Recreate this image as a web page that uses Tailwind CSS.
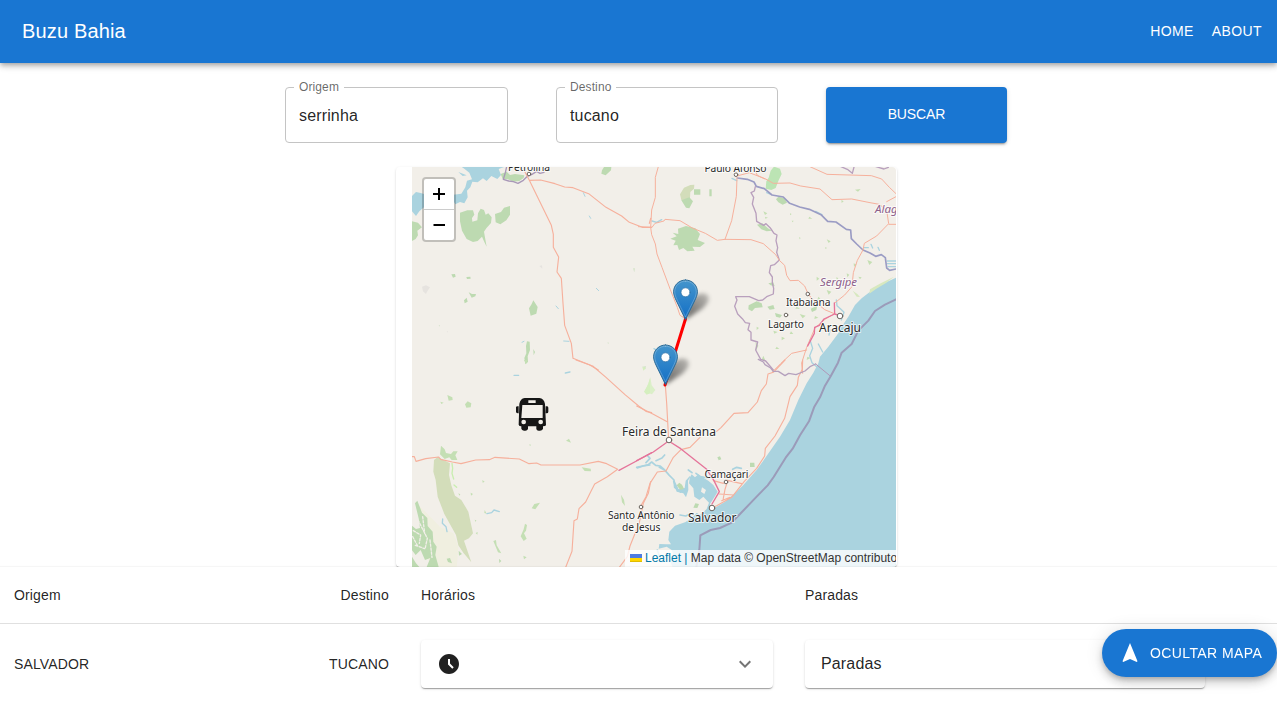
<!DOCTYPE html>
<html lang="pt-BR">
<head>
<meta charset="utf-8">
<title>Buzu Bahia</title>
<script src="https://cdn.jsdelivr.net/npm/@tailwindcss/browser@4"></script>
</head>
<body class="bg-white overflow-hidden h-[703px] font-['Liberation_Sans',Arial,sans-serif] text-[rgba(0,0,0,0.87)]">
<header class="relative z-10 flex items-center justify-between h-[63px] bg-[#1976d2] text-white pl-[22px] pr-[15px] pb-px shadow-[0_2px_4px_-1px_rgba(0,0,0,0.2),0_4px_5px_0_rgba(0,0,0,0.14),0_1px_10px_0_rgba(0,0,0,0.12)]">
  <h1 class="text-[20px] leading-8 tracking-[0.15px]">Buzu Bahia</h1>
  <nav class="flex gap-[18px] text-sm tracking-[0.4px]"><a>HOME</a><a>ABOUT</a></nav>
</header>
<main>
  <form class="flex gap-12 pl-[285px] pt-6 h-20">
    <fieldset class="relative w-[223px] h-14 rounded border border-[#c4c4c4] flex items-center px-[13px] pt-px">
      <span class="absolute left-2 -top-[9px] bg-white pl-[5px] pr-[5px] text-xs leading-4 tracking-[0.11px] text-black/60">Origem</span>
      <span class="text-base leading-[26px] tracking-[0.15px]">serrinha</span>
    </fieldset>
    <fieldset class="relative w-[222px] h-14 rounded border border-[#c4c4c4] flex items-center px-[13px] pt-px">
      <span class="absolute left-2 -top-[9px] bg-white pl-[5px] pr-[5px] text-xs leading-4 tracking-[0.11px] text-black/60">Destino</span>
      <span class="text-base leading-[26px] tracking-[0.15px]">tucano</span>
    </fieldset>
    <button type="button" class="w-[181px] h-14 rounded bg-[#1976d2] text-white text-sm tracking-[-0.1px] pb-0.5 shadow-[0_3px_1px_-2px_rgba(0,0,0,0.2),0_2px_2px_0_rgba(0,0,0,0.14),0_1px_5px_0_rgba(0,0,0,0.12)]">BUSCAR</button>
  </form>
  <section class="ml-[396px] mt-6 w-[501px] h-[400px] pl-4 pr-px rounded shadow-[0_2px_1px_-1px_rgba(0,0,0,0.2),0_1px_1px_0_rgba(0,0,0,0.14),0_1px_3px_0_rgba(0,0,0,0.12)]">
    <div class="relative w-[484px] h-[400px] overflow-hidden rounded-r bg-[#f2efe9]">
      <svg class="block" width="484" height="400" viewBox="412 167 484 400" fill="none" stroke-linejoin="round" stroke-linecap="round">
        <defs>
          <linearGradient id="pin" x1="0" y1="0" x2="0" y2="1"><stop offset="0" stop-color="#4595cc"/><stop offset="1" stop-color="#126fc6"/></linearGradient>
          <linearGradient id="shade" x1="0" y1="1" x2="1" y2="0"><stop offset="0" stop-color="#000" stop-opacity=".6"/><stop offset="1" stop-color="#000" stop-opacity=".22"/></linearGradient>
          <filter id="soft" x="-50%" y="-50%" width="200%" height="200%"><feGaussianBlur stdDeviation="2.2"/></filter>
        </defs>
        <!-- sea and inland water -->
        <g transform="translate(640,360) scale(.33333)">
          <path fill="#aad3df" d="M770-248L735-232 700-212 665-185 645-165 625-130 605-100 595-80 580-60 565-40 540-10 535 10 520 38 500 70 475 120 450 180 420 230 375 295 350 330 310 375 285 400 255 425 225 443 212 446 210 432 224 410 233 395 220 375 205 362 185 350 175 343 165 352 155 343 144 362 145 390 138 412 130 400 110 395 98 362 104 362 116 388 134 384 137 362 150 347 147 370 160 385 163 410 178 420 190 410 207 428 200 447 180 465 170 458 156 472 137 486 105 497 88 515 85 540 93 553 78 553 58 552 56 566 80 560 95 570 102 590 90 602 98 622 770 622Z"/>
          <path fill="#f2efe9" d="M158 440L172 420 181 434 176 452 162 464 152 455ZM186 382L198 390 193 402 183 395Z"/>
          <path fill="#bddab1" d="M110 376L118 368 126 374 132 386 121 390ZM166 430L177 432 172 444 160 443ZM330 308L343 308 344 321 330 321ZM232 292L240 289 244 298 236 301Z"/>
          <g stroke="#aad3df" stroke-width="5">
            <path d="M-10 322L8 318 25 314 35 306 47 316 60 318 74 330M18 308L30 295 22 286M48 302L66 294 74 285M58 322L75 331 88 346 102 360 104 382 122 396M145 330L156 338M168 340L181 350 206 354M66 606L58 588 52 570M278 328L290 322 304 325M120 465L137 468 150 462"/>
          </g>
        </g>
        <g transform="translate(390,160) scale(.33333)">
          <path fill="#aad3df" d="M66 108L78 96 92 99 102 102 115 108 130 116 142 118 157 96 171 82 190 104 214 101 226 82 231 62 246 58 238 38 224 27 214 20 345 20 326 27 333 45 322 57 304 48 290 63 279 55 263 67 247 65 241 82 231 92 233 112 223 130 210 126 196 133 187 118 166 108 146 132 123 120 102 142 88 154 78 168 66 154ZM205 36L230 46 218 48Z"/>
          <path fill="#bddab1" d="M66 184L84 188 96 202 82 212 84 226 77 237 66 243ZM210 158L232 151 249 151 253 164 246 174 247 185 262 181 264 160 272 146 282 150 287 164 295 160 305 172 303 189 289 205 282 215 290 260 283 246 276 230 263 243 249 246 230 237 216 212 210 184ZM315 162L333 156 342 143 360 138 360 164 349 181 331 193 317 187ZM332 42L350 35 360 45 375 42 403 46 401 54 388 63 370 65 352 57 338 57ZM636 31L642 21 664 21 663 31 647 46 634 41ZM184 343L195 342 197 350 189 353ZM229 351L241 350 242 356 231 357ZM236 397L246 402 258 402 256 409 245 413ZM222 421L230 413 233 425 224 430ZM430 421L443 441 439 461 422 467 417 445 425 432ZM411 544L419 545 420 570 413 589 414 606 406 613 403 594 409 580 408 558ZM430 567L435 576 431 586Z"/>
          <path fill="#bddab1" opacity=".55" d="M729 325L735 325 733 337ZM757 620L768 618 766 628ZM653 546L657 549 654 552ZM146 495L150 496 149 500Z"/>
          <path fill="#e6e3df" d="M96 380L108 376 120 382 112 394 108 402 99 394ZM448 318L456 316 457 326ZM170 514L174 514 173 518Z"/>
          <path stroke="#aad3df" stroke-width="3" d="M580 98L585 109M598 168L602 175M498 438L505 446M619 385L626 392M396 547L402 544M521 543L537 544"/>
          <path stroke="#a998b8" stroke-width="4" d="M350 20L346 38 340 58 356 63 370 65 384 70 400 61 412 49 426 43 440 34 450 40 462 37"/>
        </g>
        <g transform="translate(640,160) scale(.33333)">
          <path fill="#d3ddba" d="M120 103L132 83 151 75 163 74 162 86 151 96 150 113 141 128 124 120Z"/>
          <path fill="#bddab1" d="M124 121L148 112 159 124 148 145 138 143ZM162 88H181V104H162ZM208 88H215V109H208ZM114 206L138 198 166 205 180 222 173 240 195 249 180 261 157 260 164 272 142 274 130 264 117 270 112 255 100 256 107 242 91 236 110 229 98 218 115 222ZM326 436L350 424 365 430 368 442 345 444 336 454 325 448ZM408 118L415 110 434 115 441 128 428 134 415 127ZM385 370L400 367 404 379 392 376ZM351 194L367 190 384 205 396 212 380 214 364 208ZM382 440L400 435 404 447 389 449ZM405 459L426 465 420 473 408 470ZM512 446L532 437 529 450 516 456Z"/>
          <path fill="#bce4b4" d="M392 32L402 20 420 26 425 42 416 61 407 84 394 90 377 86 379 64 386 53Z"/>
          <path fill="#d7e8bf" d="M638 392L652 402 660 411 650 410ZM690 388L722 370 762 350 738 369 708 387 688 401Z"/>
          <g fill="#c5dfb3"><path d="M370 154l12 6-7 5ZM455 182l6 0-3 5ZM508 170l9 6-12 0ZM560 238l12 6-6 5ZM477 231l5 3-3 4ZM556 261l5 3-5 3ZM548 362l7 6-8 4ZM560 390l14 5-8 9ZM590 350l5 7-6 2ZM530 350l8 6-8 6ZM655 350l10 2-5 6ZM682 300l15 6-9 9ZM641 310l9 4-8 6ZM620 340l8 4-6 8ZM350 500l7 4-7 6ZM400 512l13 4-10 5ZM425 530l10 5-10 6ZM453 514l7 8-11 0ZM410 560l8 7-12 0ZM347 545l8 12-7 16ZM370 587l7 17-12-5ZM479 462l18 5-9 8ZM535 410l6 6-9 4ZM470 440l10 6-14 0ZM525 468l10 5-12 4ZM502 590l10 4-12 6ZM645 89l17-2-8 8ZM604 120l7 4-6 5ZM450 160l5 2-5 4ZM375 170l9 3-8 3Z"/></g>
          <g stroke="#aad3df" stroke-width="4"><path d="M36 183L50 187 65 179M276 55L290 62M527 154L546 164M380 98L391 102M671 263H685M693 253L698 264M714 262L718 271M742 303H768M742 311H768M744 320H768M589 420L591 437 602 447 612 457 604 480M570 510L567 525M510 540L518 565 509 587 516 608 530 620M535 552L548 576M42 566L55 574"/></g>
          <g stroke="#a998b8" stroke-width="4">
            <path d="M292 54L322 58 342 66 349 79 373 86 396 105 430 111 449 130 479 141 508 148 543 164 563 184 588 186 619 208 632 210 634 236 650 252 669 270 690 279 707 289 724 284 736 293 740 324 749 331 768 327" stroke="#9b9cc4" stroke-width="5"/>
            <path stroke="#b9a0bd" d="M346 80L343 93 333 98 341 112 337 132 348 160 350 184 371 196 378 191 391 204 402 220 411 225 408 242 413 263 410 277 418 300 403 314 392 317 388 338 397 351 397 369 401 385 400 402 380 410 368 420 356 422 328 410 287 410 291 420 284 439 293 462 307 476 316 488 329 490 324 509 333 517 333 540 353 546 347 570 362 598 377 603 400 630M603 20L622 28 637 40 642 21M708 20L732 27 745 22"/>
          </g>
          <g stroke="#f6b09c" stroke-width="3">
            <path d="M55 20L46 52 46 112 35 150 32 202 35 224 46 252 51 282 66 322 91 389 112 442 120 466 137 476M-5 200L36 202 45 190 72 183 75 178 120 182 157 204 196 220 232 241 255 238M291 53L289 109 275 182 255 238 333 239 370 251 407 284 419 302 434 316 440 346 450 362 475 361 494 378 504 401 519 420 554 449 583 461M291 48L328 38 377 57 400 70 450 69 482 78 540 87 576 119 635 117 690 128 718 133 740 151 746 191 710 228 673 250 669 270 652 301 640 338 636 380 614 405 583 430M510 20L561 43 694 47 725 57 748 82 768 101M768 193L747 193M740 125L768 110M583 461L552 480 525 504 500 562 485 609 488 640M500 570L455 580 423 610 398 635M345 32L352 46 375 57"/>
          </g>
          <path stroke="#e5749a" stroke-width="4" d="M583 429L584 462 600 467M584 462L552 477 538 496 524 502 523 520 503 558"/>
        </g>
        <g transform="translate(390,160) scale(.33333)" stroke="#f6b09c" stroke-width="3.4">
          <path d="M405 36L418 61 484 196 490 223 490 262 506 291 501 336 514 355 519 430 524 496 544 550 549 595 598 614 625 630M418 61L452 60 495 71 524 81 549 83 596 101 648 142 695 168 718 187 757 202H785M778 190L782 175"/>
        </g>
        <g transform="translate(390,360) scale(.33333)">
          <path fill="#d3ddba" d="M132 300L144 290 160 300 180 310 177 345 184 376 195 407 214 420 235 455 249 520 237 535 222 542 244 607 220 578 205 556 198 525 163 462 143 410 137 360 130 335Z"/>
          <path fill="#c4dfb4" d="M153 257L164 268 168 279 183 282 190 274 203 274 196 286 202 300 185 300 178 292 164 297 150 283ZM172 105L187 112 188 120 176 122ZM151 125L161 128 154 132ZM233 124L244 130 242 142 229 143 225 133ZM402 0H414L408 12ZM528 242L537 236 543 248ZM575 322L602 326 603 334 584 333ZM693 404L702 419 705 438 696 427ZM405 491L411 495 408 512 402 520 410 536 401 543 392 529 401 508ZM425 445L433 432 450 428 436 448ZM310 543L318 540 320 556 334 580 324 577ZM257 519L263 516 262 524ZM400 587L410 592 402 598ZM242 398L249 402 243 407ZM254 479L259 481 257 486ZM205 400L211 403 208 407ZM284 450L290 461 283 459ZM418 253L423 254 420 259ZM277 360L284 365 278 368Z"/>
          <path fill="#eff0dc" opacity=".7" d="M76 425L150 500 190 520 205 560 200 622 120 622Z"/>
          <path fill="#bddab1" d="M66 497L78 507 90 504 86 475 75 430 82 422 96 458 112 474 113 498 128 515 130 545 140 560 136 585 146 621 110 621 121 594 105 600 92 570 77 585 66 571ZM170 596L180 594 186 610 174 606ZM206 572L216 582 207 587ZM66 590L78 610 88 621H66ZM327 596L334 603 328 609Z"/>
          <path stroke="#f2efe9" stroke-width="4" stroke-dasharray="7 5" d="M70 512L92 525 88 550M84 480L112 535 106 563M76 556L104 566M120 540L126 592M98 470L104 520M68 530L84 560"/>
          <path stroke="#c9eeb0" stroke-width="4" d="M186 310L188 325 186 340 191 357M192 375L200 382"/>
          <path fill="#d5efbf" d="M757 20L768 24 760 32ZM762 95L775 72 780 55 780 100 770 104Z"/>
          <path stroke="#aad3df" stroke-width="4" d="M372 46H386M526 39L540 36M291 461L305 458 312 450 328 455M158 477L157 490 168 500 171 515M742 324L759 318 780 315"/>
          <g stroke="#f6b09c" stroke-width="3.4"><path d="M66 290L73 290 78 304 107 296 146 291 152 298 187 306 213 311 257 300 298 299 315 292 388 297 417 311 440 309 453 315H570L625 304 650 311 683 328 652 350 614 372 603 394 587 426 567 446 562 477 552 482 546 574 527 622M558 0L608 18 648 52 705 104 746 138 768 154 785 158M782 365L775 400 760 430 748 488 720 558 712 590 688 622"/></g>
          <path stroke="#e5749a" stroke-width="4" d="M687 331L745 300 785 278"/>
        </g>
        <g transform="translate(640,360) scale(.33333)">
          <path fill="#d5efbf" opacity=".8" d="M14 95L22 78 31 52 35 76 46 90 36 103Z"/>
          <g stroke="#f6b09c" stroke-width="3.4"><path d="M76 75L80 130 86 240M-10 138L40 163 83 186M435 0L400 37 384 42 379 72 364 92 352 126 324 158 282 160 243 203 230 214M180 232L150 262 123 269 100 292 78 333 52 336 30 370 18 410 4 435M488 0L487 28 475 52 472 76 450 110 434 175 405 228 376 265 374 288 350 325 313 364 275 412 230 437 215 443M305 371L262 361 250 370 220 362M260 372L255 388 249 420M238 402L280 405M245 422L270 412"/></g>
          <path stroke="#e5749a" stroke-width="4" d="M-10 302L40 276 86 243 122 266 200 328 222 362 238 395 216 432"/>
          <path stroke="#b5a1bd" stroke-width="4" d="M355 -2L370 6 375 14 392 24 400 34 415 34 435 47 446 40 468 44 495 33 510 20 527 12"/>
          <path stroke="#b097b8" stroke-width="3" d="M527 12L572 49"/>
          <path stroke="#9b9bb9" stroke-width="6" d="M768-182L735-166 705-147 685-118 655-88 635-48 605-22 594 8 572 49 555 77 540 112 523 140 507 184 480 226 458 266 437 293 401 351 383 376 350 410 300 462 275 488 240 504 212 510 181 526 178 570 169 622"/>
        </g>
        <!-- towns -->
        <g fill="#fff" stroke="#6b655f" stroke-width="1"><circle cx="529" cy="174" r="1.8"/><circle cx="736" cy="174.700" r="1.800"/><circle cx="807.800" cy="294" r="1.800"/><circle cx="786" cy="315" r="1.800"/><circle cx="840" cy="316" r="2.800"/><circle cx="669" cy="440" r="2.800"/><circle cx="726" cy="482" r="1.800"/><circle cx="712" cy="508" r="2.800"/><circle cx="641" cy="507" r="1.800"/></g>
        <g class="font-['Noto_Sans',sans-serif]" fill="#2a2a2a" stroke="#ffffff" stroke-opacity=".7" stroke-width="2" paint-order="stroke">
          <g font-size="10.300">
            <text x="508" y="170.500" textLength="42">Petrolina</text><text x="704.500" y="171.500" textLength="62">Paulo Afonso</text>
            <text x="786" y="306" textLength="44.500">Itabaiana</text><text x="768" y="327.500" textLength="36">Lagarto</text>
            <text x="704.500" y="478" textLength="44">Camaçari</text><text x="608" y="518.500" textLength="66.500">Santo Antônio</text><text x="622" y="530.500" textLength="38.500">de Jesus</text>
          </g>
          <g font-size="12"><text x="819" y="332" textLength="42">Aracaju</text><text x="622" y="435.500" textLength="94">Feira de Santana</text><text x="688" y="522" textLength="48.500">Salvador</text></g>
          <g font-size="11.500" font-style="italic" fill="#8d618b"><text x="820" y="286" textLength="37">Sergipe</text><text x="875" y="212.500">Alagoas</text></g>
        </g>
        <!-- bus -->
        <g transform="translate(390,360) scale(.33333)">
          <path fill="#161616" d="M404 114H448Q462 115 465 132L468 196Q466 199 459 199V207Q456 212 450 212H446Q440 212 439 207V199H414V207Q412 212 406 212H402Q395 211 394 206V199Q387 199 386 194L388 132Q391 115 404 114ZM378 142Q378 139 383 139H386V160H383Q378 159 378 156ZM467 139H470Q475 139 475 143V155Q475 160 470 160H467Z"/>
          <path fill="#f2efe9" d="M415 121H437V129H415ZM397 135H458V174H394Z"/><circle cx="401" cy="186" r="7" fill="#f2efe9"/><circle cx="452" cy="186" r="7" fill="#f2efe9"/>
        </g>
        <!-- route and stops -->
        <path stroke="red" stroke-width="3" d="M685.500 319L665 385"/>
        <g fill="url(#shade)" filter="url(#soft)"><path d="M685 320L689 303Q697 291 706 294 713 299 702 309Z"/><path d="M665 385L669 368Q677 356 686 359 693 364 682 374Z"/></g>
        <g id="stop"><path transform="translate(673,279.500)" fill="url(#pin)" stroke="#2e6c97" stroke-width="1" d="M12.500.5C5.900.5.600 5.700.600 12.300c0 3.300 1.500 6.300 2.800 9.100L12.500 40l9.100-18.600c1.300-2.800 2.800-5.800 2.800-9.100C24.400 5.700 19.100.5 12.500.5Z"/><path transform="translate(673,279.500)" stroke="#fff" stroke-opacity=".22" d="M12.500 1.600C6.500 1.600 1.700 6.300 1.700 12.300c0 3 1.400 5.900 2.700 8.700L12.500 37.400 20.600 21c1.300-2.800 2.700-5.700 2.700-8.700C23.300 6.300 18.500 1.600 12.500 1.600Z"/><circle cx="685.500" cy="292.300" r="4.500" fill="#fff" stroke="#2d6ea3" stroke-width=".7"/></g>
        <use href="#stop" x="-20" y="65"/>
      </svg>
      <div class="absolute left-[10px] top-[10px] w-[34px] h-[65px] rounded border-2 border-black/20 bg-clip-padding bg-white grid grid-rows-[31px_30px] overflow-hidden">
        <span class="border-b border-[#ccc] flex items-center justify-center"><svg width="12" height="12" stroke="#000" stroke-width="2"><path d="M6 0V12M0 6H12"/></svg></span>
        <span class="flex items-center justify-center"><svg width="12" height="12" stroke="#000" stroke-width="2"><path d="M0.500 6H12"/></svg></span>
      </div>
      <div class="absolute left-[213px] bottom-0 w-[290px] h-[17px] bg-white/80 pl-[5px] flex items-center whitespace-nowrap text-xs leading-[17px] text-[#333]">
        <svg class="mr-[3px] -mt-px" width="12" height="8"><path fill="#4c7be1" d="M0 0h12v4H0z"/><path fill="#ffd500" d="M0 4h12v3H0z"/><path fill="#e0bc00" d="M0 7h12v1H0z"/></svg><span class="text-[#0078a8]">Leaflet&nbsp;|&nbsp;</span><span>Map data © OpenStreetMap contributors</span>
      </div>
    </div>
  </section>
  <section class="relative bg-white text-sm tracking-[0.15px] shadow-[0_-1px_1px_rgba(0,0,0,0.035)]">
    <div class="grid grid-cols-[389px_384px_1fr] gap-x-0 h-[57px] border-b border-[#e0e0e0] items-center">
      <div class="flex justify-between pl-[14px]"><span>Origem</span><span>Destino</span></div>
      <div class="pl-8">Horários</div>
      <div class="pl-8">Paradas</div>
    </div>
    <div class="grid grid-cols-[389px_384px_432px] h-20 items-center">
      <div class="flex justify-between pl-[14px]"><span>SALVADOR</span><span>TUCANO</span></div>
      <div class="pl-8"><div class="h-12 rounded bg-white flex items-center justify-between px-4 shadow-[0_2px_1px_-1px_rgba(0,0,0,0.2),0_1px_1px_0_rgba(0,0,0,0.14),0_1px_3px_0_rgba(0,0,0,0.12)]">
        <svg width="24" height="24" viewBox="0 0 24 24" fill="#212121"><path d="M11.990 2C6.470 2 2 6.480 2 12s4.470 10 9.990 10C17.520 22 22 17.520 22 12S17.520 2 11.990 2zm3.300 14.710L11 12.410V7h2v4.590l3.710 3.710-1.420 1.410z"/></svg>
        <svg width="24" height="24" viewBox="0 0 24 24" fill="#757575"><path d="M16.590 8.590 12 13.170 7.410 8.590 6 10l6 6 6-6z"/></svg>
      </div></div>
      <div class="pl-8"><div class="h-12 rounded bg-white flex items-center px-4 text-base shadow-[0_2px_1px_-1px_rgba(0,0,0,0.2),0_1px_1px_0_rgba(0,0,0,0.14),0_1px_3px_0_rgba(0,0,0,0.12)]">Paradas</div></div>
    </div>
  </section>
</main>
<button type="button" class="fixed right-0 top-[629px] w-[175px] h-12 rounded-full bg-[#1976d2] text-white text-sm tracking-[0.4px] flex items-center pl-4 gap-2 whitespace-nowrap shadow-[0_3px_5px_-1px_rgba(0,0,0,0.2),0_6px_10px_0_rgba(0,0,0,0.14),0_1px_18px_0_rgba(0,0,0,0.12)]">
  <svg width="24" height="24" viewBox="0 0 24 24" fill="#fff"><path d="M12 2 4.500 20.290l.71.710L12 18l6.790 3 .71-.71z"/></svg>OCULTAR MAPA
</button>
</body>
</html>
